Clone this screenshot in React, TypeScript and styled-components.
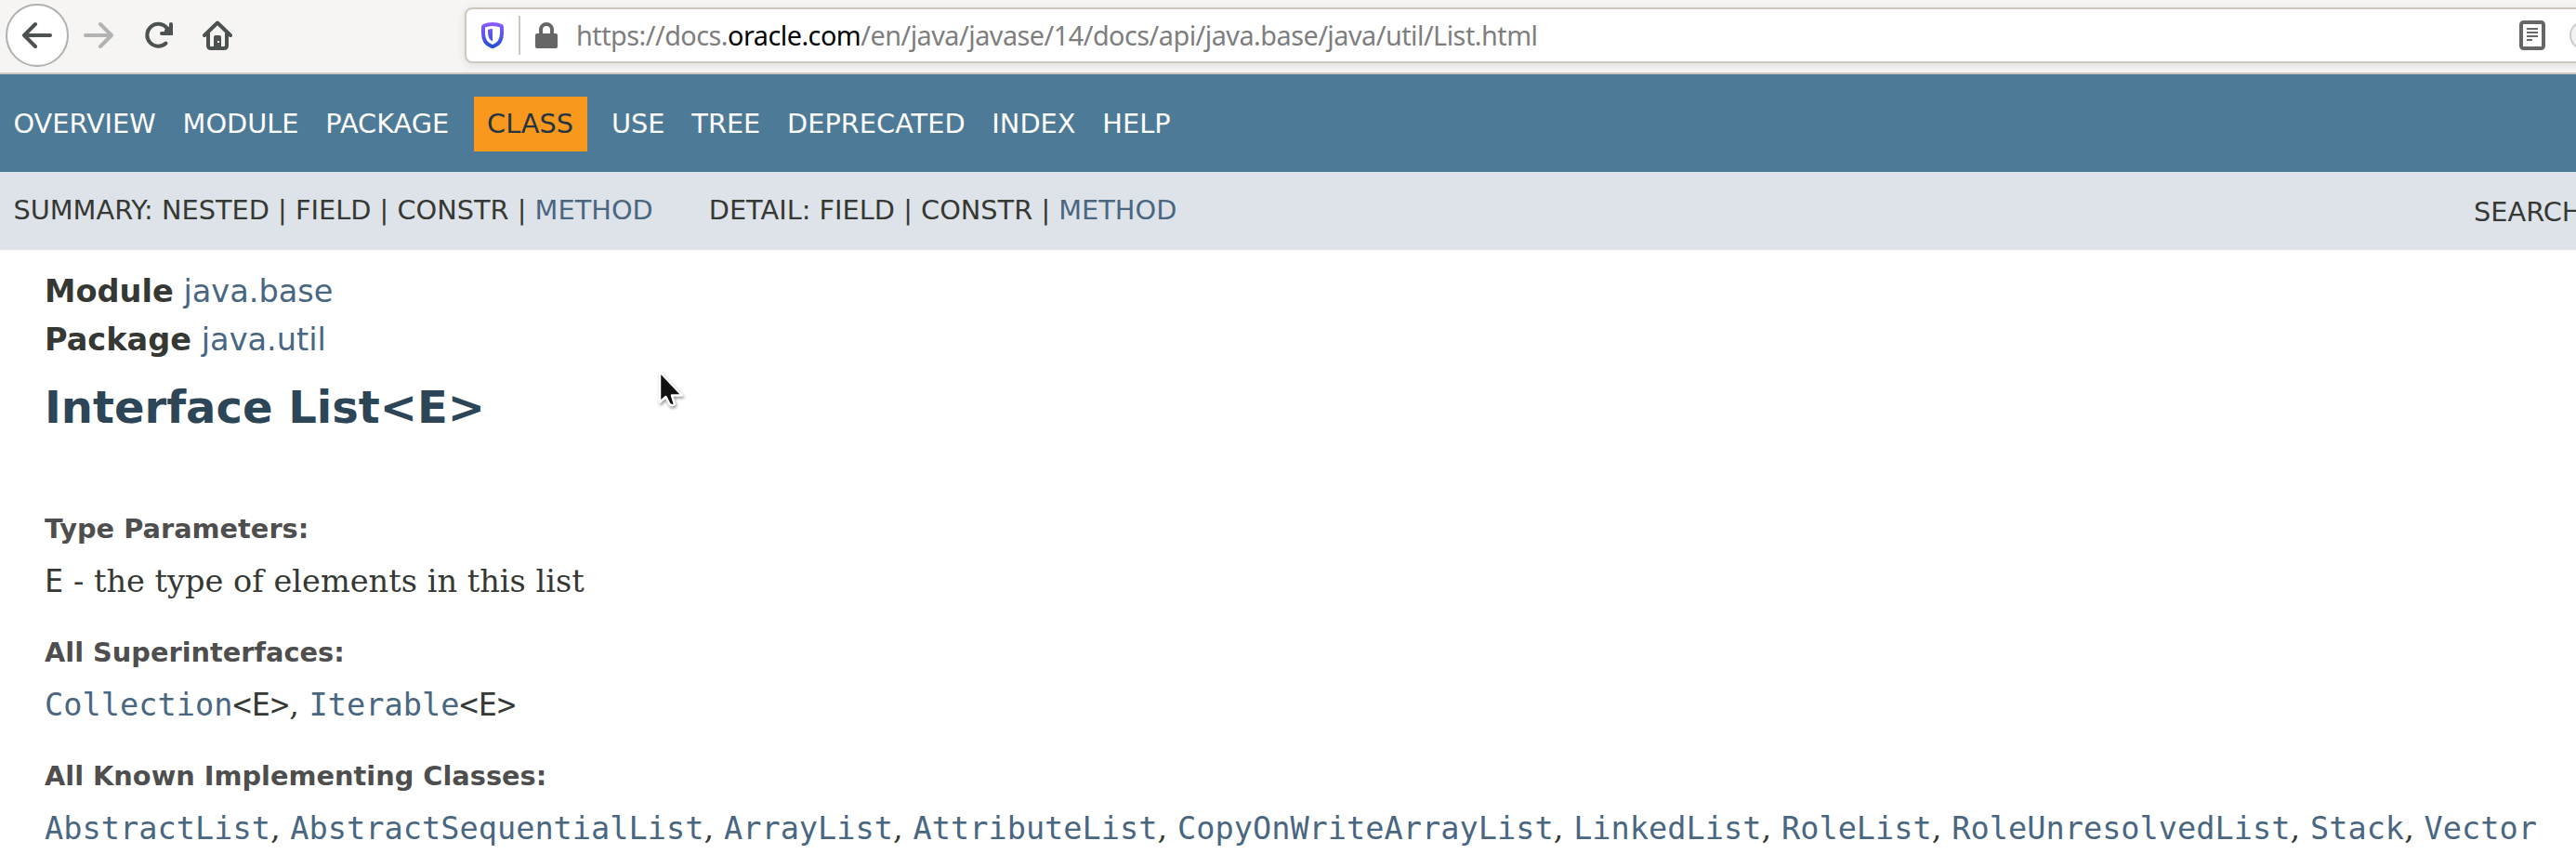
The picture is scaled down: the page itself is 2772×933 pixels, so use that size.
import React from "react";
import styled, { createGlobalStyle } from "styled-components";

const GlobalStyle = createGlobalStyle`
  html, body, #root { margin: 0; height: 100%; }
  body { background: #fff; overflow: hidden; color: #353833; font: 33.6px "DejaVu Sans", sans-serif; }
`;

const Page = styled.div`
  width: 2772px;
  height: 933px;
  overflow: hidden;
  position: relative;
`;

const Toolbar = styled.header`
  box-sizing: border-box;
  height: 80px;
  display: flex;
  align-items: flex-start;
  padding: 4px 0 0 6px;
  background: #f6f5f3;
  border-bottom: 2px solid #cdc7bf;
  overflow: hidden;
`;

const BackButton = styled.button`
  box-sizing: border-box;
  flex: none;
  width: 68px;
  height: 68px;
  padding: 0;
  border: 2px solid #b0b0af;
  border-radius: 50%;
  background: #fff;
  display: grid;
  place-items: center;
`;

const ToolButton = styled.button<{ $left: number }>`
  flex: none;
  width: 32px;
  height: 68px;
  margin: 0 0 0 ${(p) => p.$left}px;
  padding: 0;
  border: 0;
  background: none;
  display: grid;
  place-items: center;
`;

const Icon = styled.svg`
  display: block;
  flex: none;
`;

const AddressBar = styled.div`
  box-sizing: border-box;
  flex: none;
  width: 2400px;
  height: 60px;
  margin: 4px 0 0 250px;
  display: flex;
  align-items: center;
  background: #fff;
  border: 2px solid #cdc7bf;
  border-radius: 8px;
  box-shadow: 0 2px 10px rgba(0, 0, 0, 0.1);
  padding-left: 12px;
`;

const Divider = styled.span`
  flex: none;
  width: 2px;
  height: 42px;
  background: #cdc7bf;
  margin: 0 14px 0 12px;
`;

const Url = styled.span`
  flex: none;
  width: 2091px;
  margin-left: 18px;
  font: 28.8px/56px "Noto Sans", sans-serif;
  letter-spacing: -0.51px;
  color: #7e7e7e;
  white-space: nowrap;
  b { font-weight: 400; color: #000; }
`;

const MoreButton = styled.span`
  box-sizing: border-box;
  flex: none;
  width: 32px;
  height: 32px;
  margin-left: 26px;
  border: 2px solid #ccc;
  border-radius: 50%;
  background: #f2f2f2;
`;

const TopNav = styled.nav`
  height: 105px;
  box-sizing: border-box;
  padding: 24px 0 0 14.4px;
  background: #4d7a97;
  display: flex;
  gap: 28.8px;
  align-items: flex-start;
  font-size: 28.8px;
  line-height: 34px;
`;

const NavItem = styled.a<{ $active?: boolean }>`
  color: ${(p) => (p.$active ? "#253441" : "#fff")};
  background: ${(p) => (p.$active ? "#f8981d" : "transparent")};
  padding: ${(p) => (p.$active ? "12px 14.4px 13px" : "12px 0 13px")};
  margin: ${(p) => (p.$active ? "0 -2.4px" : "0")};
`;

const SubNav = styled.div`
  height: 84px;
  box-sizing: border-box;
  background: #dee3e9;
  padding: 24px 0 0 14.4px;
  display: flex;
  font-size: 28.8px;
  line-height: 34px;
  white-space: pre;
`;

const Detail = styled.span`
  margin-left: 60px;
`;

const Search = styled.span`
  width: 110px;
  margin: 2px 0 0 auto;
`;

const Link = styled.a`
  color: #4a6782;
`;

const Main = styled.main`
  padding: 19px 48px 0;
  white-space: nowrap;
`;

const Qualifier = styled.div`
  height: 52px;
  line-height: 52px;
`;

const Title = styled.h1`
  margin: 18px 0 0;
  font-size: 48px;
  line-height: 56px;
  color: #2c4557;
`;

const Definitions = styled.dl`
  margin: 86px 0 0;
`;

const Term = styled.dt`
  font-size: 28.8px;
  font-weight: 700;
  line-height: 34px;
  color: #4e4e4e;
`;

const Description = styled.dd`
  margin: 15px 0 34px;
  height: 50px;
  line-height: 50px;
  font-family: "DejaVu Serif", serif;
`;

const Code = styled.code`
  font-family: "DejaVu Sans Mono", monospace;
  font-size: 33.6px;
  letter-spacing: 0.025px;
`;

const Cursor = styled.svg`
  position: absolute;
  left: 706px;
  top: 396px;
  filter: drop-shadow(1px 2px 1.5px rgba(0, 0, 0, 0.4));
`;

const NAV = ["OVERVIEW", "MODULE", "PACKAGE", "CLASS", "USE", "TREE", "DEPRECATED", "INDEX", "HELP"];

const CLASSES = [
  "AbstractList", "AbstractSequentialList", "ArrayList", "AttributeList", "CopyOnWriteArrayList",
  "LinkedList", "RoleList", "RoleUnresolvedList", "Stack", "Vector",
];

const Arrow = ({ color, flip }: { color: string; flip?: boolean }) => (
  <Icon width="32" height="32" viewBox="0 0 32 32" fill="none" stroke={color} strokeWidth="4" strokeLinecap="round" strokeLinejoin="round">
    <path d={flip ? "M2 16H29M18 4L30 16L18 28" : "M30 16H3M14 4L2 16L14 28"} />
  </Icon>
);

export default function App() {
  return (
    <Page>
      <GlobalStyle />
      <Toolbar>
        <BackButton><Arrow color="#4c5250" /></BackButton>
        <ToolButton $left={16}><Arrow color="#b2b3b2" flip /></ToolButton>
        <ToolButton $left={33}>
          <Icon width="32" height="32" viewBox="0 0 32 32" fill="none" stroke="#4c5250" strokeWidth="4" strokeLinecap="round">
            <path d="M23.500 24.500A12 12 0 1 1 24.500 8" />
            <path d="M29 4V14H19" strokeLinejoin="miter" />
            <path d="M22 10L29 5V14H22Z" fill="#4c5250" stroke="none" />
          </Icon>
        </ToolButton>
        <ToolButton $left={31}>
          <Icon width="32" height="32" viewBox="0 0 32 32" fill="none" stroke="#4c5250" strokeWidth="4" strokeLinecap="round" strokeLinejoin="round">
            <path d="M2 16L16 2.500L30 16M6 14V27Q6 30 9 30H23Q26 30 26 27V14" />
            <path d="M12 29V18Q12 16 14 16H18Q20 16 20 18V29Z" fill="#4c5250" stroke="none" />
            <rect x="16" y="22" width="2" height="2" fill="#f6f5f3" stroke="none" />
          </Icon>
        </ToolButton>
        <AddressBar>
          <Icon width="32" height="32" viewBox="0 0 32 32">
            <defs>
              <linearGradient id="shield" x1="0" y1="0" x2="0" y2="1">
                <stop offset="0" stopColor="#9059ff" />
                <stop offset="1" stopColor="#2050d0" />
              </linearGradient>
            </defs>
            <path fill="url(#shield)" fillRule="evenodd" d="M16 2Q22 2 26 4Q28 5 28 7V14Q28 26 18 29.500Q16 30.500 14 29.500Q4 26 4 14V7Q4 5 6 4Q10 2 16 2ZM16 6Q11 6 8 7.500V14Q8 23 16 26Q24 23 24 14V7.500Q21 6 16 6ZM16 9V22.500Q11 20 11 13V10Q13 9 16 9Z" />
          </Icon>
          <Divider />
          <Icon width="28" height="32" viewBox="0 0 28 32">
            <rect x="2" y="14" width="24" height="16" rx="2" fill="#666" />
            <path d="M8 15V10A6 6 0 0 1 20 10V15" fill="none" stroke="#666" strokeWidth="4" />
          </Icon>
          <Url>https://docs.<b>oracle.com</b>/en/java/javase/14/docs/api/java.base/java/util/List.html</Url>
          <Icon width="28" height="32" viewBox="0 0 28 32">
            <rect x="2" y="2" width="24" height="28" rx="2.500" fill="#fff" stroke="#666" strokeWidth="4" />
            <path d="M8 9H20M8 13H20M8 17H20M8 21H14" stroke="#666" strokeWidth="2" />
          </Icon>
          <MoreButton />
        </AddressBar>
      </Toolbar>
      <TopNav>
        {NAV.map((label) => <NavItem key={label} $active={label === "CLASS"}>{label}</NavItem>)}
      </TopNav>
      <SubNav>
        <span>SUMMARY: NESTED | FIELD | CONSTR | <Link>METHOD</Link></span>
        <Detail>DETAIL: FIELD | CONSTR | <Link>METHOD</Link></Detail>
        <Search>SEARCH</Search>
      </SubNav>
      <Main>
        <Qualifier><b>Module</b> <Link>java.base</Link></Qualifier>
        <Qualifier><b>Package</b> <Link>java.util</Link></Qualifier>
        <Title>Interface List&lt;E&gt;</Title>
        <Definitions>
          <Term>Type Parameters:</Term>
          <Description><Code>E</Code> - the type of elements in this list</Description>
          <Term>All Superinterfaces:</Term>
          <Description>
            <Code><Link>Collection</Link>&lt;E&gt;</Code>, <Code><Link>Iterable</Link>&lt;E&gt;</Code>
          </Description>
          <Term>All Known Implementing Classes:</Term>
          <Description>
            {CLASSES.map((name, i) => (
              <React.Fragment key={name}>{i > 0 && ", "}<Code><Link>{name}</Link></Code></React.Fragment>
            ))}
          </Description>
        </Definitions>
      </Main>
      <Cursor width="34" height="48" viewBox="0 0 34 48">
        <path d="M4 4V37L10.500 31L14.500 39Q17 41.500 20 39L17 29.500H28Z" fill="#111" stroke="#fff" strokeWidth="2.500" strokeLinejoin="round" />
      </Cursor>
    </Page>
  );
}
